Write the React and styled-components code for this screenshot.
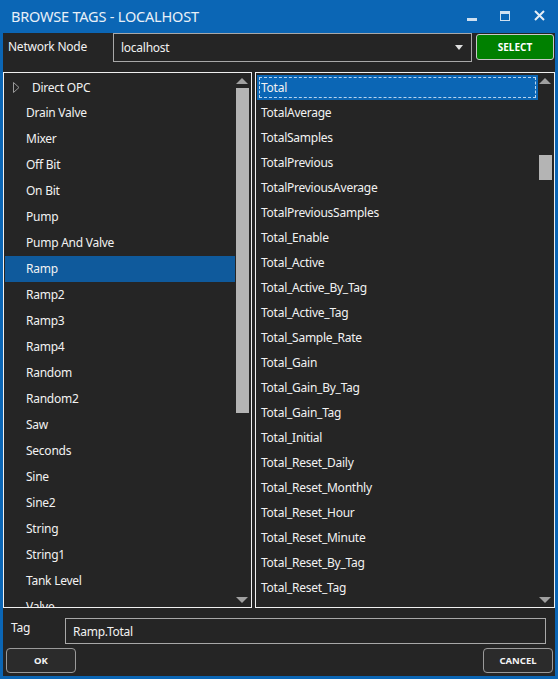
import React from "react";
import styled, { createGlobalStyle } from "styled-components";

const tagsLeft = [
  "Drain Valve", "Mixer", "Off Bit", "On Bit", "Pump", "Pump And Valve", "Ramp",
  "Ramp2", "Ramp3", "Ramp4", "Random", "Random2", "Saw", "Seconds", "Sine",
  "Sine2", "String", "String1", "Tank Level", "Valve",
];

const tagsRight = [
  "Total", "TotalAverage", "TotalSamples", "TotalPrevious", "TotalPreviousAverage",
  "TotalPreviousSamples", "Total_Enable", "Total_Active", "Total_Active_By_Tag",
  "Total_Active_Tag", "Total_Sample_Rate", "Total_Gain", "Total_Gain_By_Tag",
  "Total_Gain_Tag", "Total_Initial", "Total_Reset_Daily", "Total_Reset_Monthly",
  "Total_Reset_Hour", "Total_Reset_Minute", "Total_Reset_By_Tag", "Total_Reset_Tag",
];

const App = () => {
  return (
    <>
      <GlobalStyle />
      <StyledWindow>
        <TitleBar>
          <span className="title">BROWSE TAGS - LOCALHOST</span>
          <WinButtons>
            <svg width="10" height="10" viewBox="0 0 10 10">
              <rect x="0" y="7" width="10" height="3" fill="#cfe0f0" />
            </svg>
            <svg width="10" height="10" viewBox="0 0 10 10">
              <rect x="0.5" y="0.5" width="9" height="9" fill="none" stroke="#cfe0f0" />
              <rect x="0" y="0" width="10" height="3" fill="#cfe0f0" />
            </svg>
            <svg width="11" height="11" viewBox="0 0 11 11">
              <path d="M1 1 L10 10 M10 1 L1 10" stroke="#e6eef6" strokeWidth="2" />
            </svg>
          </WinButtons>
        </TitleBar>
        <Body>
          <TopRow>
            <Label>Network Node</Label>
            <Combo>
              <span>localhost</span>
              <svg width="8" height="5" viewBox="0 0 8 5">
                <path d="M0 0 L8 0 L4 5 Z" fill="#e0e0e0" />
              </svg>
            </Combo>
            <SelectButton>SELECT</SelectButton>
          </TopRow>
          <Panels>
            <ListPanel $width="249px">
              <List $pad="1px">
                <TreeRow>
                  <svg width="7" height="11" viewBox="0 0 7 11">
                    <path d="M0.5 0.5 L6 5.5 L0.5 10.5 Z" fill="none" stroke="#9a9a9a" />
                  </svg>
                  <span>Direct OPC</span>
                </TreeRow>
                {tagsLeft.map((t) => (
                  <Row key={t} $h="26px" $indent="21px" $selected={t === "Ramp"} $dark>
                    {t}
                  </Row>
                ))}
              </List>
              <Scrollbar>
                <Arrow $up />
                <ThumbTrack>
                  <Thumb style={{ top: 0, height: 325 }} />
                </ThumbTrack>
                <Arrow />
              </Scrollbar>
            </ListPanel>
            <ListPanel $width="auto" $grow>
              <List $pad="2px">
                {tagsRight.map((t, i) => (
                  <Row key={t} $h="25px" $indent="4px" $selected={i === 0} $focus={i === 0}>
                    {t}
                  </Row>
                ))}
              </List>
              <Scrollbar>
                <Arrow $up />
                <ThumbTrack>
                  <Thumb style={{ top: 67, height: 25 }} />
                </ThumbTrack>
                <Arrow />
              </Scrollbar>
            </ListPanel>
          </Panels>
          <TagRow>
            <Label $small>Tag</Label>
            <TagInput>Ramp.Total</TagInput>
          </TagRow>
          <ButtonRow>
            <DialogButton>OK</DialogButton>
            <DialogButton>CANCEL</DialogButton>
          </ButtonRow>
        </Body>
      </StyledWindow>
    </>
  );
};

const GlobalStyle = createGlobalStyle`
  html, body {
    margin: 0;
    padding: 0;
    background: #0b66b5;
  }
  body {
    font-family: "Noto Sans", "Open Sans", sans-serif;
  }
`;

const StyledWindow = styled.div`
  width: 558px;
  height: 679px;
  box-sizing: border-box;
  background: #0b66b5;
  padding: 0 3px 3px 3px;
  display: flex;
  flex-direction: column;
`;

const TitleBar = styled.div`
  height: 33px;
  display: flex;
  align-items: center;
  padding-left: 8px;
  flex-shrink: 0;

  .title {
    color: #e8f0f8;
    font-size: 14.5px;
    letter-spacing: -0.2px;
    margin-top: -1px;
  }
`;

const WinButtons = styled.div`
  margin-left: auto;
  display: flex;
  align-items: center;
  gap: 23px;
  padding-right: 10px;
  margin-top: -2px;

  svg:last-child {
    margin-left: 1px;
  }
`;

const Body = styled.div`
  flex: 1;
  background: #252525;
  display: flex;
  flex-direction: column;
  color: #f2f2f2;
  font-size: 12px;
  letter-spacing: -0.25px;
`;

const TopRow = styled.div`
  height: 39px;
  display: flex;
  align-items: flex-start;
  flex-shrink: 0;
`;

const Label = styled.div`
  width: ${(p) => (p.$small ? "62px" : "110px")};
  padding-left: ${(p) => (p.$small ? "8px" : "5px")};
  box-sizing: border-box;
  font-size: 12px;
  line-height: 28px;
  height: 28px;
  color: #f2f2f2;
`;

const Combo = styled.div`
  width: 359px;
  height: 29px;
  box-sizing: border-box;
  border: 1px solid #a8a8a8;
  display: flex;
  align-items: center;
  justify-content: space-between;
  padding: 0 8px 0 7px;
  font-size: 12px;
`;

const SelectButton = styled.div`
  margin-left: 4px;
  margin-top: 1px;
  width: 78px;
  height: 26px;
  box-sizing: border-box;
  background: #008000;
  border: 1px solid #c8c8c8;
  border-radius: 3px;
  display: flex;
  align-items: center;
  justify-content: center;
  font-size: 10px;
  font-weight: 700;
  letter-spacing: 0;
  color: #ffffff;
`;

const Panels = styled.div`
  height: 536px;
  display: flex;
  gap: 3px;
  flex-shrink: 0;
`;

const ListPanel = styled.div`
  width: ${(p) => p.$width};
  flex: ${(p) => (p.$grow ? "1" : "none")};
  box-sizing: border-box;
  border: 1px solid #f0f0f0;
  display: flex;
  overflow: hidden;
  position: relative;
`;

const List = styled.div`
  flex: 1;
  padding-top: ${(p) => p.$pad};
  padding-left: 1px;
  overflow: hidden;
  display: flex;
  flex-direction: column;
`;

const TreeRow = styled.div`
  height: 26px;
  flex-shrink: 0;
  display: flex;
  align-items: center;
  padding-left: 8px;
  gap: 12px;
  font-size: 12px;
`;

const Row = styled.div`
  height: ${(p) => p.$h};
  line-height: ${(p) => p.$h};
  flex-shrink: 0;
  padding-left: ${(p) => p.$indent};
  box-sizing: border-box;
  font-size: 12px;
  white-space: nowrap;
  background: ${(p) =>
    p.$selected ? (p.$dark ? "#0f5a9c" : "#0b66b5") : "transparent"};
  outline: ${(p) => (p.$focus ? "1px dashed #b8d4ee" : "none")};
  outline-offset: -3px;
`;

const Scrollbar = styled.div`
  width: 14px;
  margin-right: 2px;
  display: flex;
  flex-direction: column;
  align-items: center;
  flex-shrink: 0;
`;

const Arrow = styled.div`
  height: 15px;
  width: 14px;
  flex-shrink: 0;
  display: flex;
  align-items: center;
  justify-content: center;

  &::before {
    content: "";
    border-left: 6px solid transparent;
    border-right: 6px solid transparent;
    ${(p) =>
      p.$up
        ? "border-bottom: 6px solid #a0a0a0;"
        : "border-top: 6px solid #a0a0a0;"}
  }
`;

const ThumbTrack = styled.div`
  flex: 1;
  width: 14px;
  position: relative;
`;

const Thumb = styled.div`
  position: absolute;
  left: 1px;
  right: 0;
  background: #b4b4b4;
`;

const TagRow = styled.div`
  height: 40px;
  display: flex;
  align-items: center;
  padding-top: 6px;
  box-sizing: border-box;
  flex-shrink: 0;

  ${Label} {
    margin-top: -6px;
  }
`;

const TagInput = styled.div`
  width: 481px;
  height: 26px;
  box-sizing: border-box;
  border: 1px solid #a8a8a8;
  padding-left: 7px;
  display: flex;
  align-items: center;
  font-size: 12px;
`;

const ButtonRow = styled.div`
  display: flex;
  justify-content: space-between;
  padding: 0 2px 0 3px;
  flex-shrink: 0;
`;

const DialogButton = styled.div`
  width: 70px;
  height: 25px;
  box-sizing: border-box;
  border: 1px solid #9a9a9a;
  border-radius: 4px;
  background: #2b2b2b;
  display: flex;
  align-items: center;
  justify-content: center;
  font-size: 9.5px;
  font-weight: 700;
  letter-spacing: 0;
  color: #f4f4f4;
`;

export default App;
